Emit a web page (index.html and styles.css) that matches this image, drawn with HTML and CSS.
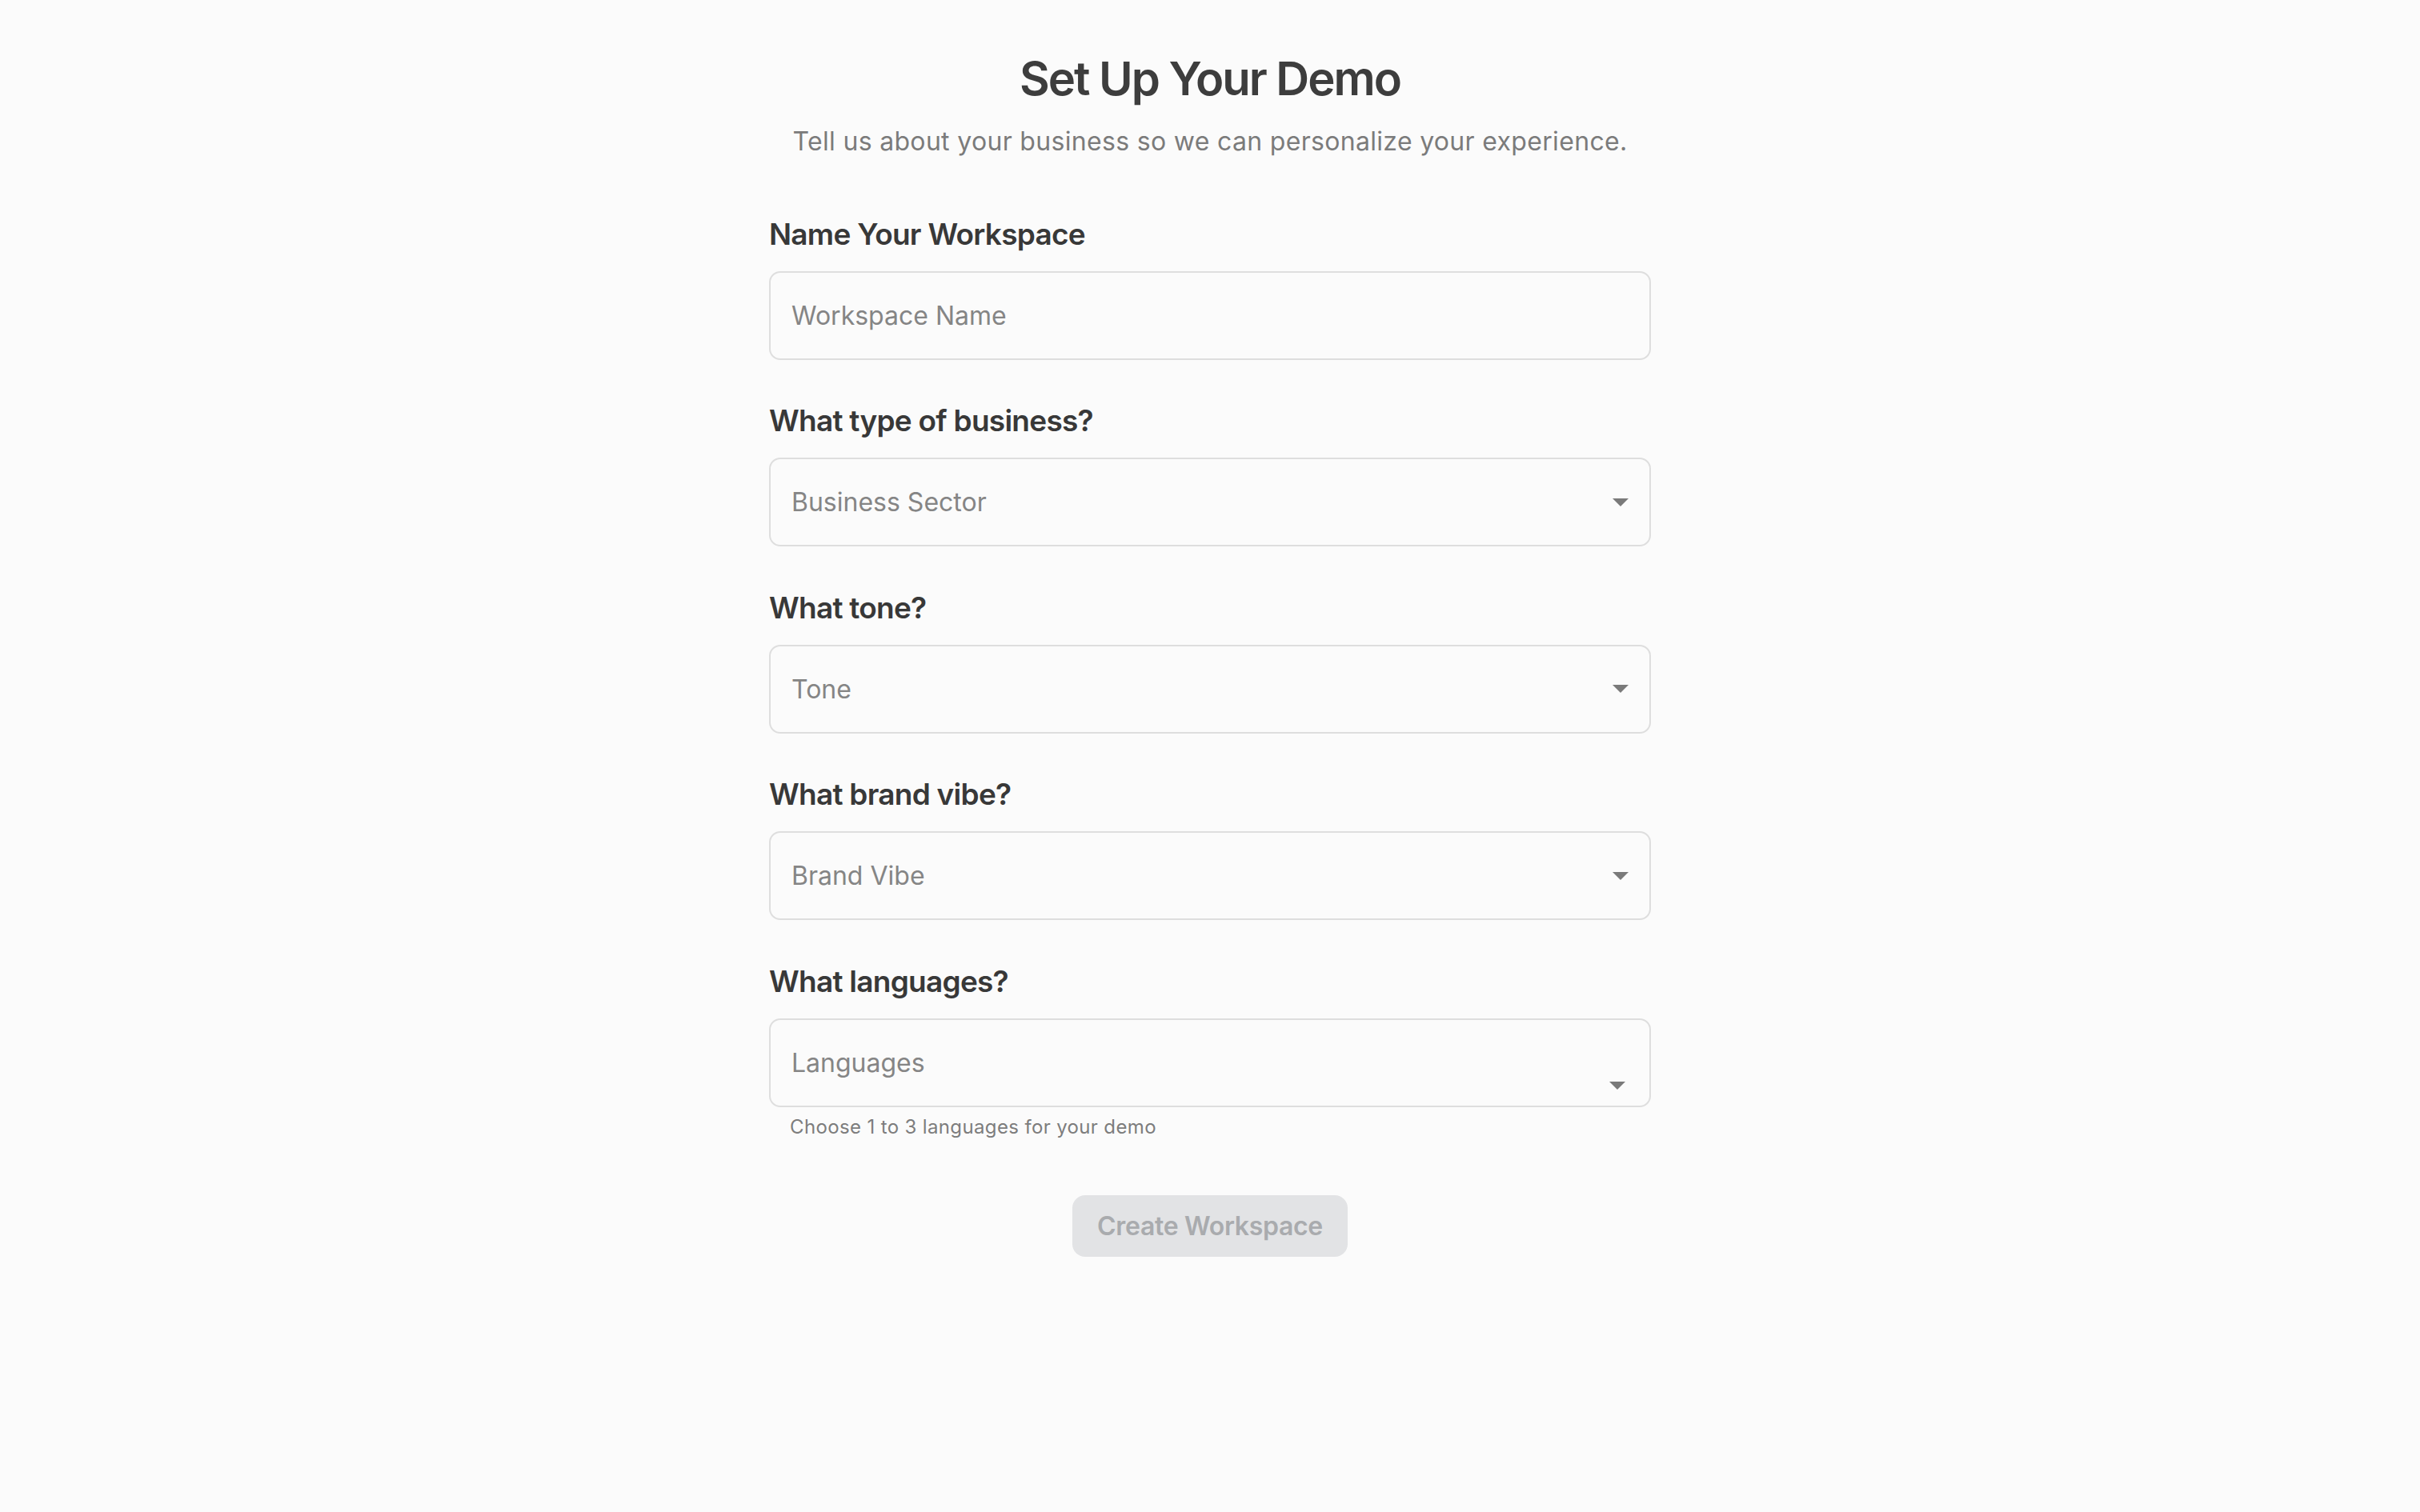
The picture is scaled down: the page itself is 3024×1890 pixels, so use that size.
FILE: index.html
```html
<!DOCTYPE html>
<html lang="en">
<head>
<meta charset="utf-8">
<title>Set Up Your Demo</title>
<link rel="stylesheet" href="styles.css">
</head>
<body>
<main class="page">
  <header class="intro">
    <h1 class="title">Set Up Your Demo</h1>
    <p class="subtitle">Tell us about your business so we can personalize your experience.</p>
  </header>

  <form class="form">
    <div class="field">
      <label class="label" for="ws">Name Your Workspace</label>
      <input class="control" id="ws" type="text" placeholder="Workspace Name">
    </div>

    <div class="field">
      <span class="label">What type of business?</span>
      <div class="control select">
        <span class="placeholder">Business Sector</span>
        <svg class="caret" viewBox="0 0 20 10" width="20" height="10"><path d="M0 0h20L10 10z"/></svg>
      </div>
    </div>

    <div class="field">
      <span class="label">What tone?</span>
      <div class="control select">
        <span class="placeholder">Tone</span>
        <svg class="caret" viewBox="0 0 20 10" width="20" height="10"><path d="M0 0h20L10 10z"/></svg>
      </div>
    </div>

    <div class="field">
      <span class="label">What brand vibe?</span>
      <div class="control select">
        <span class="placeholder">Brand Vibe</span>
        <svg class="caret" viewBox="0 0 20 10" width="20" height="10"><path d="M0 0h20L10 10z"/></svg>
      </div>
    </div>

    <div class="field">
      <span class="label">What languages?</span>
      <div class="control select multi">
        <span class="placeholder">Languages</span>
        <svg class="caret" viewBox="0 0 20 10" width="20" height="10"><path d="M0 0h20L10 10z"/></svg>
      </div>
      <p class="helper">Choose 1 to 3 languages for your demo</p>
    </div>

    <div class="actions">
      <button class="btn" type="button" disabled>Create Workspace</button>
    </div>
  </form>
</main>
</body>
</html>
```

FILE: styles.css
```css
* { box-sizing: border-box; }

html, body {
  margin: 0;
  background: #fbfbfb;
}

body {
  font-family: Inter, "Noto Sans", "Liberation Sans", sans-serif;
  color: #3a3a3a;
}

.page {
  width: 1102px;
  margin: 0 auto;
  padding-top: 63px;
  display: flex;
  flex-direction: column;
}

.intro {
  display: flex;
  flex-direction: column;
  align-items: center;
  gap: 20px;
}

.title {
  margin: 0;
  font-size: 58px;
  line-height: 70px;
  font-weight: 600;
  letter-spacing: -0.035em;
  color: #3d3d3d;
}

.subtitle {
  margin: 0;
  font-size: 32px;
  line-height: 48px;
  font-weight: 400;
  color: #7b7b7b;
  letter-spacing: 0.01em;
}

.form {
  margin-top: 66px;
  display: flex;
  flex-direction: column;
  gap: 50.4px;
}

.field {
  display: flex;
  flex-direction: column;
  gap: 23px;
}

.label {
  font-size: 37px;
  line-height: 47px;
  padding-top: 2px;
  font-weight: 560;
  letter-spacing: -0.02em;
  color: #383838;
}

.control {
  height: 111px;
  width: 100%;
  border: 2px solid #dedede;
  border-radius: 14px;
  background: #fbfbfb;
  padding: 0 26px;
  font-family: inherit;
  font-size: 32px;
  color: #3a3a3a;
  outline: none;
}

.control::placeholder { color: #858585; }

.select {
  display: flex;
  align-items: center;
  justify-content: space-between;
}

.placeholder {
  color: #858585;
  font-size: 32px;
}

.caret {
  fill: #7a7a7a;
}

.multi {
  position: relative;
}

.multi .caret {
  position: absolute;
  right: 30px;
  top: 77px;
}

.helper {
  margin: -14px 0 0 26px;
  font-size: 24px;
  line-height: 32px;
  color: #7d7d7d;
  letter-spacing: 0.015em;
}

.actions {
  display: flex;
  justify-content: center;
  margin-top: 19px;
}

.btn {
  width: 344px;
  height: 77px;
  border: none;
  border-radius: 16px;
  background: #e2e3e5;
  color: #a9abae;
  font-family: inherit;
  font-size: 32px;
  font-weight: 560;
  letter-spacing: -0.01em;
}
```
